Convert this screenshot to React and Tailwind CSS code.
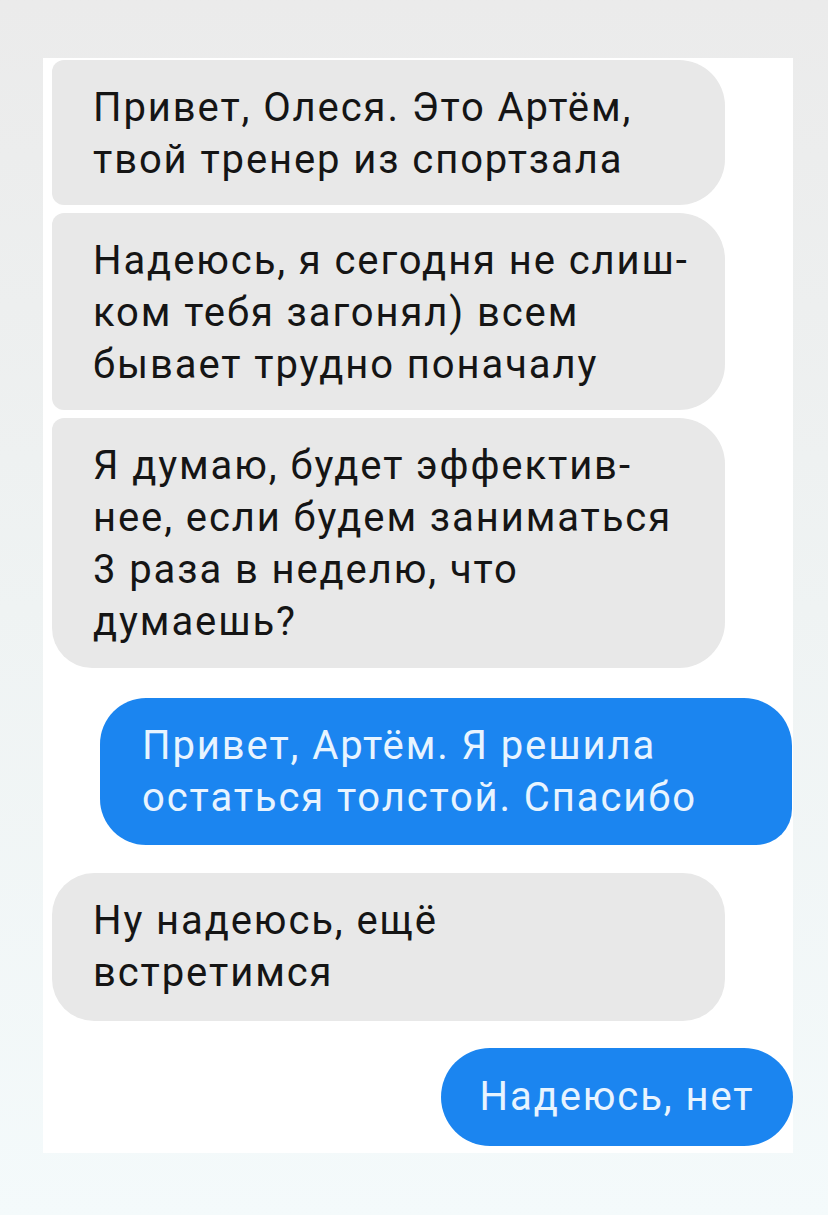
import React from 'react'

const Bubble = ({ mine, className, children }) => {
    const base = mine
        ? 'bg-[#1b85f0] text-[#e8f4ff]'
        : 'bg-[#e8e8e8] text-[#151515]'
    return (
        <div className={`${base} text-[40px] leading-[52px] tracking-[1.9px] ${className}`}>
            {children}
        </div>
    )
}

const App = () => {
    return (
        <div className="min-h-[1215px] w-[828px] bg-gradient-to-b from-[#ebebeb] via-[#eff3f3] to-[#f4fafb] pt-[58px] pl-[43px] pr-[35px] font-['Roboto','Noto_Sans',sans-serif]">
            <div className="bg-white w-[750px] h-[1095px] flex flex-col pt-[2px] pl-[9px]">
                <div className="flex flex-col gap-[8px] w-[673px]">
                    <Bubble className="rounded-l-[12px] rounded-r-[46px] pt-[22px] pb-[19px] pl-[41px]">
                        Привет, Олеся. Это Артём,<br />твой тренер из спортзала
                    </Bubble>
                    <Bubble className="rounded-l-[12px] rounded-r-[46px] pt-[22px] pb-[19px] pl-[41px]">
                        Надеюсь, я сегодня не слиш-<br />ком тебя загонял) всем<br />бывает трудно поначалу
                    </Bubble>
                    <Bubble className="rounded-l-[12px] rounded-tr-[46px] rounded-br-[46px] rounded-bl-[40px] pt-[22px] pb-[20px] pl-[41px]">
                        Я думаю, будет эффектив-<br />нее, если будем заниматься<br />3 раза в неделю, что<br />думаешь?
                    </Bubble>
                </div>

                <Bubble mine className="mt-[30px] ml-[48px] w-[692px] rounded-l-[46px] rounded-tr-[48px] rounded-br-[36px] pt-[22px] pb-[21px] pl-[42px]">
                    Привет, Артём. Я решила<br />остаться толстой. Спасибо
                </Bubble>

                <Bubble className="mt-[28px] w-[673px] rounded-[42px] pt-[22px] pb-[22px] pl-[41px]">
                    Ну надеюсь, ещё<br />встретимся
                </Bubble>

                <div className="mt-[27px] flex justify-end">
                    <Bubble mine className="rounded-full w-[352px] h-[98px] flex items-center justify-center">
                        Надеюсь, нет
                    </Bubble>
                </div>
            </div>
        </div>
    )
}

export default App
